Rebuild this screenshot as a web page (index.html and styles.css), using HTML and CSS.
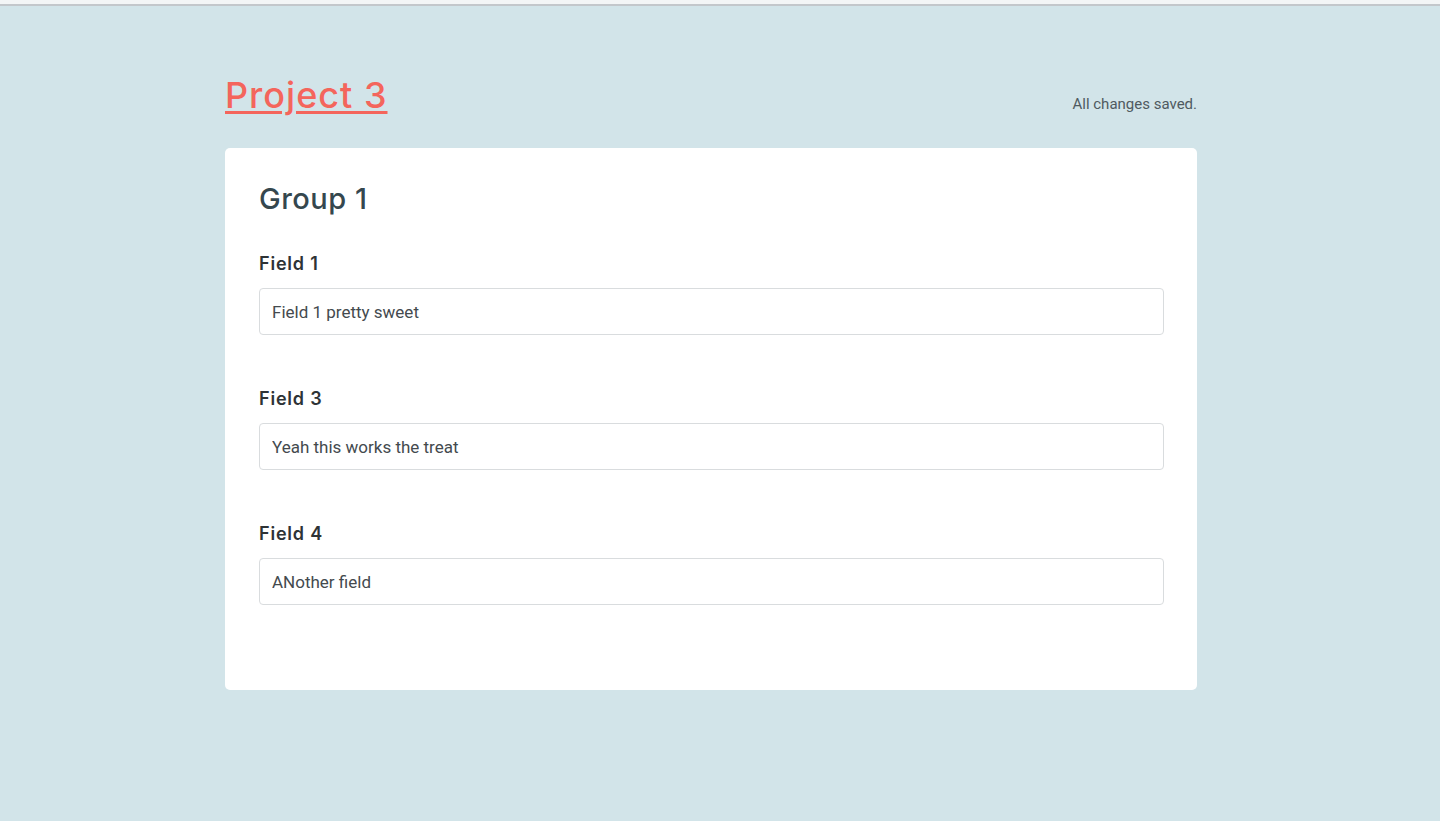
FILE: index.html
```html
<!DOCTYPE html>
<html lang="en">
<head>
<meta charset="utf-8">
<title>Project 3</title>
<link rel="stylesheet" href="styles.css">
</head>
<body>
<div class="topline"></div>
<main class="page">
  <header class="header">
    <a class="title" href="#">Project 3</a>
    <span class="status">All changes saved.</span>
  </header>
  <section class="card">
    <h2 class="group-title">Group 1</h2>
    <div class="field">
      <label class="field-label" for="f1">Field 1</label>
      <input class="field-input" id="f1" type="text" value="Field 1 pretty sweet">
    </div>
    <div class="field">
      <label class="field-label" for="f3">Field 3</label>
      <input class="field-input" id="f3" type="text" value="Yeah this works the treat">
    </div>
    <div class="field">
      <label class="field-label" for="f4">Field 4</label>
      <input class="field-input" id="f4" type="text" value="ANother field">
    </div>
  </section>
</main>
</body>
</html>
```

FILE: styles.css
```css
html, body {
  margin: 0;
  padding: 0;
  background: #d2e4e9;
  min-height: 100%;
}
body {
  font-family: Roboto, "Liberation Sans", sans-serif;
  height: 821px;
  overflow: hidden;
}
.topline {
  height: 4px;
  background: #f3f5f6;
  border-bottom: 2px solid #c3c7cb;
}
.page {
  width: 972px;
  margin-left: 225px;
}
.header {
  display: flex;
  justify-content: space-between;
  align-items: flex-end;
  height: 109px;
}
.title {
  font-family: Inter, "Open Sans", sans-serif;
  font-weight: 500;
  font-size: 36px;
  line-height: 40px;
  letter-spacing: 1px;
  color: #f4655c;
  text-decoration: underline;
  text-decoration-thickness: 3px;
  text-underline-offset: 3px;
}
.status {
  font-size: 15px;
  color: #4f5a60;
  line-height: 16px;
  margin-bottom: 3px;
}
.card {
  margin-top: 33px;
  background: #ffffff;
  border-radius: 5px;
  padding: 34px 34px 83px 34px;
  height: 542px;
  box-sizing: border-box;
}
.group-title {
  margin: 0 0 37px 0;
  font-family: Inter, "Open Sans", sans-serif;
  font-weight: 500;
  font-size: 29px;
  line-height: 34px;
  letter-spacing: 0.5px;
  color: #35474e;
}
.field {
  display: flex;
  flex-direction: column;
  margin-bottom: 53px;
}
.field:last-child {
  margin-bottom: 0;
}
.field-label {
  font-family: Inter, "Open Sans", sans-serif;
  font-weight: 600;
  font-size: 18px;
  line-height: 22px;
  letter-spacing: 0.8px;
  color: #2e3336;
  margin-bottom: 13px;
}
.field-input {
  box-sizing: border-box;
  height: 47px;
  width: 905px;
  border: 1px solid #d9dcde;
  border-radius: 4px;
  padding: 0 12px;
  font-family: Roboto, "Liberation Sans", sans-serif;
  font-size: 17px;
  color: #444a4e;
  background: #fff;
  outline: none;
}
```
